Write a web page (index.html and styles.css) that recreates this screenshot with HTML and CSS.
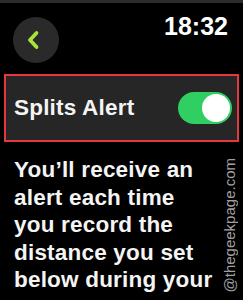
FILE: index.html
```html
<!DOCTYPE html>
<html>
<head>
<meta charset="utf-8">
<link rel="stylesheet" href="styles.css">
</head>
<body>
<div class="screen">
  <div class="topbar"></div>
  <div class="header">
    <div class="back">
      <svg width="16" height="20" viewBox="0 0 16 20"><path d="M11.5 3 L5 10 L11.5 17" fill="none" stroke="#a6e43a" stroke-width="3.8" stroke-linecap="round" stroke-linejoin="round"/></svg>
    </div>
    <div class="time">18:32</div>
  </div>
  <div class="card">
    <span class="label">Splits Alert</span>
    <span class="toggle"><span class="knob"></span></span>
  </div>
  <p class="desc">You’ll receive an alert each time you record the distance you set below during your</p>
  <div class="mark">@thegeekpage.com</div>
</div>
</body>
</html>
```
FILE: styles.css
```css
html, body {
  margin: 0;
  padding: 0;
  background: #000;
}
.screen {
  position: relative;
  width: 243px;
  height: 300px;
  overflow: hidden;
  background: #000;
  font-family: "Liberation Sans", Arial, sans-serif;
  color: #f4f4f4;
}
.topbar {
  height: 3px;
  background: #2c2c2c;
}
.header {
  display: flex;
  justify-content: space-between;
  align-items: flex-start;
  padding: 11px 15px 0 13px;
}
.back {
  width: 46px;
  height: 46px;
  margin-top: 3px;
  border-radius: 50%;
  background: #2a2a2a;
  display: flex;
  align-items: center;
  justify-content: center;
}
.back svg {
  margin-right: 6px;
}
.time {
  font-size: 25px;
  line-height: 25px;
  font-weight: bold;
  color: #fff;
}
.card {
  margin: 11px 4px 0 4px;
  height: 64px;
  border: 2px solid #e5373d;
  background: #262626;
  display: flex;
  align-items: center;
  justify-content: space-between;
  padding: 0 5px 0 8px;
}
.label {
  font-size: 22.5px;
  font-weight: bold;
  letter-spacing: 0.2px;
}
.toggle {
  width: 54px;
  height: 32px;
  border-radius: 16px;
  background: #2fcf62;
  position: relative;
}
.knob {
  position: absolute;
  right: 2px;
  top: 2px;
  width: 28px;
  height: 28px;
  border-radius: 50%;
  background: #fff;
}
.desc {
  margin: 14px 0 0 14px;
  width: 205px;
  font-size: 22.5px;
  line-height: 27.5px;
  font-weight: bold;
  letter-spacing: 0.2px;
}
.mark {
  position: absolute;
  right: 6px;
  top: 158px;
  writing-mode: vertical-rl;
  transform: rotate(180deg);
  font-size: 15px;
  line-height: 15px;
  color: #a0a0a0;
}
```
